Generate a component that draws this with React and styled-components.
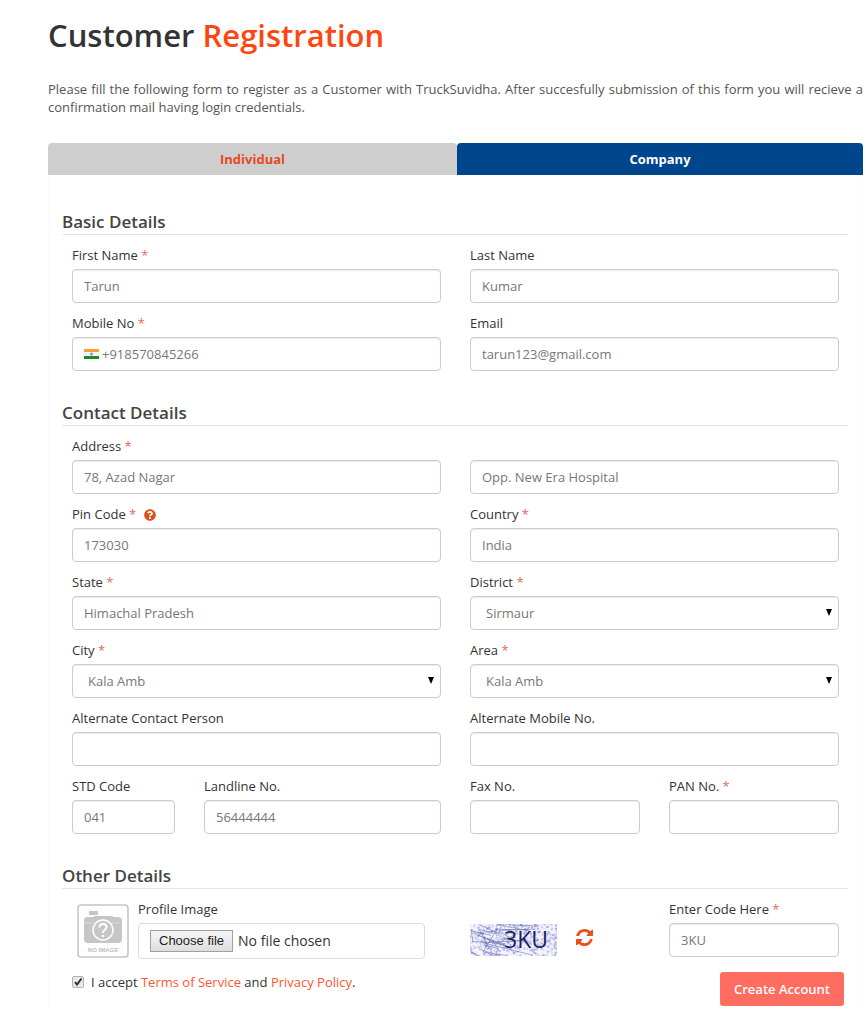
import React, { useState } from "react";
import styled, { createGlobalStyle, css } from "styled-components";
import { FaQuestionCircle } from "react-icons/fa";

const GlobalStyle = createGlobalStyle`
  *, *::before, *::after { box-sizing: border-box; }
  body {
    margin: 0;
    background: #fff;
    color: #333;
    font-family: "Open Sans", sans-serif;
    font-size: 13px;
    line-height: 24px;
  }
`;

const Page = styled.main`
  padding: 15px 3px 14px 48px;
`;

const Title = styled.h1`
  margin: 0 0 25px;
  font-size: 31px;
  line-height: 40px;
  font-weight: 600;
  color: #333;
`;

const Accent = styled.span`
  color: #ff4510;
`;

const Intro = styled.p`
  margin: 0 0 27px;
  font-size: 13px;
  line-height: 18px;
  color: #555;
  text-align: justify;
`;

const TabList = styled.div`
  display: grid;
  grid-template-columns: 409fr 406fr;
`;

const Tab = styled.button`
  height: 32px;
  padding: 0;
  border: 0;
  border-radius: 4px 4px 0 0;
  background: ${(p) => (p.$active ? "#00468c" : "#cecece")};
  color: ${(p) => (p.$active ? "#fff" : "#e64a23")};
  font: 700 13px/32px "Open Sans", sans-serif;
  cursor: pointer;
`;

const Panel = styled.form`
  padding: 35px 14px 0 13px;
  border: solid #fafafa;
  border-width: 0 1px;
`;

const Section = styled.section`
  margin-bottom: 30px;
`;

const SectionTitle = styled.h2`
  margin: 0 0 8px;
  border-bottom: 1px solid #e5e5e5;
  font-size: 17px;
  line-height: 24px;
  font-weight: 600;
  color: #444;
`;

const Fields = styled.div`
  display: grid;
  grid-template-columns: 1fr 1fr;
  gap: 8px 29px;
  align-items: ${(p) => (p.$top ? "start" : "end")};
  padding: 0 9px 0 10px;
`;

const Split = styled.div`
  display: grid;
  grid-template-columns: ${(p) => p.$columns};
  column-gap: 29px;
  align-items: end;
`;

const FieldBox = styled.div`
  min-width: 0;
`;

const Label = styled.label`
  display: block;
  margin-bottom: 2px;
  white-space: nowrap;
`;

const Star = styled.span`
  color: #e8695a;
`;

const Help = styled.a`
  display: inline-block;
  margin-left: 8px;
  color: #e34a1c;
  font-size: 12px;
  vertical-align: top;

  svg {
    display: block;
    margin-top: 7px;
  }
`;

const control = css`
  display: block;
  width: 100%;
  height: 34px;
  border: 1px solid #ccc;
  border-radius: 4px;
  background: #fff;
  box-shadow: inset 0 1px 1px rgba(0, 0, 0, 0.08);
  color: #777;
  font: 400 13px/20px "Open Sans", sans-serif;
`;

const Input = styled.input`
  ${control}
  padding: 0 12px 0 ${(p) => (p.$flag ? 29 : 11)}px;
`;

const Select = styled.select`
  ${control}
  appearance: none;
  padding: 0 24px 0 15px;
`;

const ControlWrap = styled.div`
  position: relative;
`;

const Arrow = styled.svg`
  position: absolute;
  right: 7px;
  top: 13px;
  pointer-events: none;
`;

const Flag = styled.svg`
  position: absolute;
  left: 12px;
  top: 12px;
`;

const ProfileRow = styled.div`
  display: flex;
  gap: 9px;
  padding: 0 16px 0 4px;
`;

const Placeholder = styled.svg`
  flex: none;
  margin-top: 6px;
`;

const ProfileField = styled.div`
  flex: 1;
`;

const FileBox = styled.div`
  display: flex;
  align-items: center;
  gap: 5px;
  height: 36px;
  padding: 0 11px;
  border: 1px solid #ddd;
  border-radius: 4px;
  font-size: 14px;
`;

const HiddenFile = styled.input`
  position: absolute;
  width: 1px;
  height: 1px;
  opacity: 0;
`;

const FileButton = styled.label`
  height: 22px;
  padding: 0 8px;
  border: 1px solid #a0a0a0;
  background: linear-gradient(#f6f6f6, #dedede);
  color: #222;
  font: 400 13px/20px "Liberation Sans", sans-serif;
`;

const CaptchaCell = styled.div`
  display: flex;
  align-items: center;
  gap: 19px;
  height: 34px;
`;

const IconButton = styled.button`
  display: flex;
  padding: 0;
  margin-bottom: 6px;
  border: 0;
  background: none;
  color: #e8501f;
  cursor: pointer;
`;

const Footer = styled.div`
  display: flex;
  justify-content: space-between;
  align-items: flex-end;
  padding: 0 4px 0 10px;
  margin-top: -19px;
`;

const Terms = styled.div`
  display: flex;
  align-items: center;
  align-self: flex-start;
  gap: 7px;
`;

const Tick = styled.input`
  appearance: none;
  flex: none;
  width: 12px;
  height: 12px;
  margin: 0;
  border: 1px solid #b0b0b0;
  border-radius: 2px;
  background: #e9e9e9;
`;

const TickMark = styled.svg`
  position: absolute;
  left: 1px;
  top: 0;
  pointer-events: none;
`;

const TickWrap = styled.span`
  position: relative;
  display: flex;
`;

const TextLink = styled.a`
  color: #ff5533;
  text-decoration: none;
`;

const Submit = styled.button`
  height: 34px;
  margin-top: 2px;
  padding: 0 14px;
  border: 0;
  border-radius: 3px;
  background: #ff6c60;
  color: #fff;
  font: 600 13px/34px "Open Sans", sans-serif;
  cursor: pointer;
`;

function Field({ id, label, required, help, flag, value = "", options, aria }) {
  return (
    <FieldBox>
      {label && (
        <Label htmlFor={id}>
          {label}
          {required && <Star> *</Star>}
          {help && (
            <Help href="#pin-help" aria-label="Help with pin code">
              <FaQuestionCircle />
            </Help>
          )}
        </Label>
      )}
      <ControlWrap>
        {options ? (
          <>
            <Select id={id} defaultValue={options[0]}>
              {options.map((o) => (
                <option key={o}>{o}</option>
              ))}
            </Select>
            <Arrow width="6" height="7" viewBox="0 0 6 7" aria-hidden="true">
              <path d="M0 0H6L3 7Z" fill="#000" />
            </Arrow>
          </>
        ) : (
          <Input id={id} defaultValue={value} aria-label={aria} $flag={flag} />
        )}
        {flag && (
          <Flag width="15" height="10" viewBox="0 0 15 10" aria-hidden="true">
            <rect width="15" height="10" fill="#f4f4f4" />
            <rect width="15" height="3" fill="#ff9c33" />
            <rect y="7" width="15" height="3" fill="#1c8c1c" />
            <circle cx="7.5" cy="5" r="1.5" fill="#8f8fc4" />
          </Flag>
        )}
      </ControlWrap>
    </FieldBox>
  );
}

function NoImage() {
  return (
    <Placeholder width="53" height="56" viewBox="0 0 53 56" role="img" aria-label="No profile image">
      <rect x="2" y="2" width="50" height="52" rx="3" fill="#fff" stroke="#c6c6c6" strokeWidth="1.6" />
      <rect x="13" y="8" width="9" height="4" fill="#c6c6c6" />
      <path d="M11 14H17L19 13H36L38 14H42Q46 14 46 18V36Q46 40 42 40H12Q8 40 8 36V18Q8 14 11 14Z" fill="#c6c6c6" />
      <path d="M8 20H46" stroke="#dadada" />
      <circle cx="27" cy="27" r="10" fill="#c6c6c6" stroke="#fff" strokeWidth="1.5" />
      <path d="M23.5 24.5Q23.5 21 27 21Q30.5 21 30.5 24Q30.5 26 28.5 27Q27 28 27 30" fill="none" stroke="#fff" strokeWidth="2" />
      <circle cx="27" cy="33" r="1.3" fill="#fff" />
      <text x="27" y="49" textAnchor="middle" fontFamily="Liberation Sans, sans-serif" fontSize="6" fontWeight="700" fill="#bdbdbd">
        NO IMAGE
      </text>
    </Placeholder>
  );
}

function makeNoise() {
  let seed = 41;
  const rnd = () => {
    seed = (seed * 16807) % 2147483647;
    return seed / 2147483647;
  };
  const dots = Array.from({ length: 620 }, () => ({
    x: rnd() * 87,
    y: rnd() * 32,
    r: 0.4 + rnd() * 0.8,
    o: 0.2 + rnd() * 0.4,
  }));
  const lines = Array.from({ length: 24 }, () => {
    const x = rnd() * 40;
    const y = rnd() * 30;
    return { x, y, x2: x + 10 + rnd() * 28, y2: y + (rnd() - 0.3) * 14 };
  });
  return { dots, lines };
}

const noise = makeNoise();

function Captcha() {
  return (
    <svg width="87" height="32" viewBox="0 0 87 32" role="img" aria-label="Verification code">
      <rect width="87" height="32" fill="#f3f3fd" />
      {noise.dots.map((d, i) => (
        <circle key={i} cx={d.x} cy={d.y} r={d.r} fill="#7f7fdc" opacity={d.o} />
      ))}
      <g stroke="#39478f" strokeWidth="0.7" opacity="0.6">
        {noise.lines.map((l, i) => (
          <line key={i} x1={l.x} y1={l.y} x2={l.x2} y2={l.y2} />
        ))}
        <path d="M1 5L3 19M8 3L22 29M13 28L28 4M17 25L48 9M10 18L62 31" />
      </g>
      <text x="34" y="24" fontFamily="Open Sans, sans-serif" fontSize="23" fill="#1b2260">
        3KU
      </text>
    </svg>
  );
}

function RefreshIcon() {
  return (
    <svg width="17" height="17" viewBox="128 128 1536 1536" fill="currentColor" aria-hidden="true">
      <path d="M1639 1056q0 5-1 7-64 268-268 434.5t-478 166.5q-146 0-282.5-55t-243.5-157l-129 129q-19 19-45 19t-45-19-19-45v-448q0-26 19-45t45-19h448q26 0 45 19t19 45-19 45l-137 137q71 66 161 102t187 36q134 0 250-65t186-179q11-17 53-117 8-23 30-23h192q13 0 22.5 9.5t9.5 22.5zm25-800v448q0 26-19 45t-45 19h-448q-26 0-45-19t-19-45 19-45l138-138q-148-137-349-137-134 0-250 65t-186 179q-11 17-53 117-8 23-30 23h-199q-13 0-22.5-9.5t-9.5-22.5v-7q65-268 270-434.5t480-166.5q146 0 284 55.5t245 156.5l130-129q19-19 45-19t45 19 19 45z" />
    </svg>
  );
}

export default function App() {
  const [tab, setTab] = useState("Company");
  const [accepted, setAccepted] = useState(true);
  return (
    <Page>
      <GlobalStyle />
      <Title>
        Customer <Accent>Registration</Accent>
      </Title>
      <Intro>
        Please fill the following form to register as a Customer with TruckSuvidha. After succesfully submission of
        this form you will recieve a confirmation mail having login credentials.
      </Intro>
      <TabList role="tablist">
        {["Individual", "Company"].map((name) => (
          <Tab
            key={name}
            type="button"
            role="tab"
            aria-selected={tab === name}
            $active={tab === name}
            onClick={() => setTab(name)}
          >
            {name}
          </Tab>
        ))}
      </TabList>
      <Panel onSubmit={(e) => e.preventDefault()}>
        <Section>
          <SectionTitle>Basic Details</SectionTitle>
          <Fields>
            <Field id="first-name" label="First Name" required value="Tarun" />
            <Field id="last-name" label="Last Name" value="Kumar" />
            <Field id="mobile" label="Mobile No" required flag value="+918570845266" />
            <Field id="email" label="Email" value="tarun123@gmail.com" />
          </Fields>
        </Section>
        <Section>
          <SectionTitle>Contact Details</SectionTitle>
          <Fields>
            <Field id="address" label="Address" required value="78, Azad Nagar" />
            <Field id="address-2" aria="Address line 2" value="Opp. New Era Hospital" />
            <Field id="pin" label="Pin Code" required help value="173030" />
            <Field id="country" label="Country" required value="India" />
            <Field id="state" label="State" required value="Himachal Pradesh" />
            <Field id="district" label="District" required options={["Sirmaur"]} />
            <Field id="city" label="City" required options={["Kala Amb"]} />
            <Field id="area" label="Area" required options={["Kala Amb"]} />
            <Field id="alt-person" label="Alternate Contact Person" />
            <Field id="alt-mobile" label="Alternate Mobile No." />
            <Split $columns="103fr 237fr">
              <Field id="std" label="STD Code" value="041" />
              <Field id="landline" label="Landline No." value="56444444" />
            </Split>
            <Split $columns="1fr 1fr">
              <Field id="fax" label="Fax No." />
              <Field id="pan" label="PAN No." required />
            </Split>
          </Fields>
        </Section>
        <Section>
          <SectionTitle>Other Details</SectionTitle>
          <Fields $top>
            <ProfileRow>
              <NoImage />
              <ProfileField>
                <Label htmlFor="photo">Profile Image</Label>
                <FileBox>
                  <HiddenFile type="file" id="photo" />
                  <FileButton htmlFor="photo">Choose file</FileButton>
                  <span>No file chosen</span>
                </FileBox>
              </ProfileField>
            </ProfileRow>
            <Split $columns="1fr 1fr">
              <CaptchaCell>
                <Captcha />
                <IconButton type="button" aria-label="Refresh code">
                  <RefreshIcon />
                </IconButton>
              </CaptchaCell>
              <Field id="code" label="Enter Code Here" required value="3KU" />
            </Split>
          </Fields>
        </Section>
        <Footer>
          <Terms>
            <TickWrap>
              <Tick type="checkbox" id="accept" checked={accepted} onChange={(e) => setAccepted(e.target.checked)} />
              {accepted && (
                <TickMark width="11" height="11" viewBox="0 0 11 11" aria-hidden="true">
                  <path d="M2 6L4 8.5L8.5 2.5" fill="none" stroke="#333" strokeWidth="2" />
                </TickMark>
              )}
            </TickWrap>
            <label htmlFor="accept">
              I accept <TextLink href="#terms">Terms of Service</TextLink> and{" "}
              <TextLink href="#privacy">Privacy Policy</TextLink>.
            </label>
          </Terms>
          <Submit type="submit">Create Account</Submit>
        </Footer>
      </Panel>
    </Page>
  );
}
